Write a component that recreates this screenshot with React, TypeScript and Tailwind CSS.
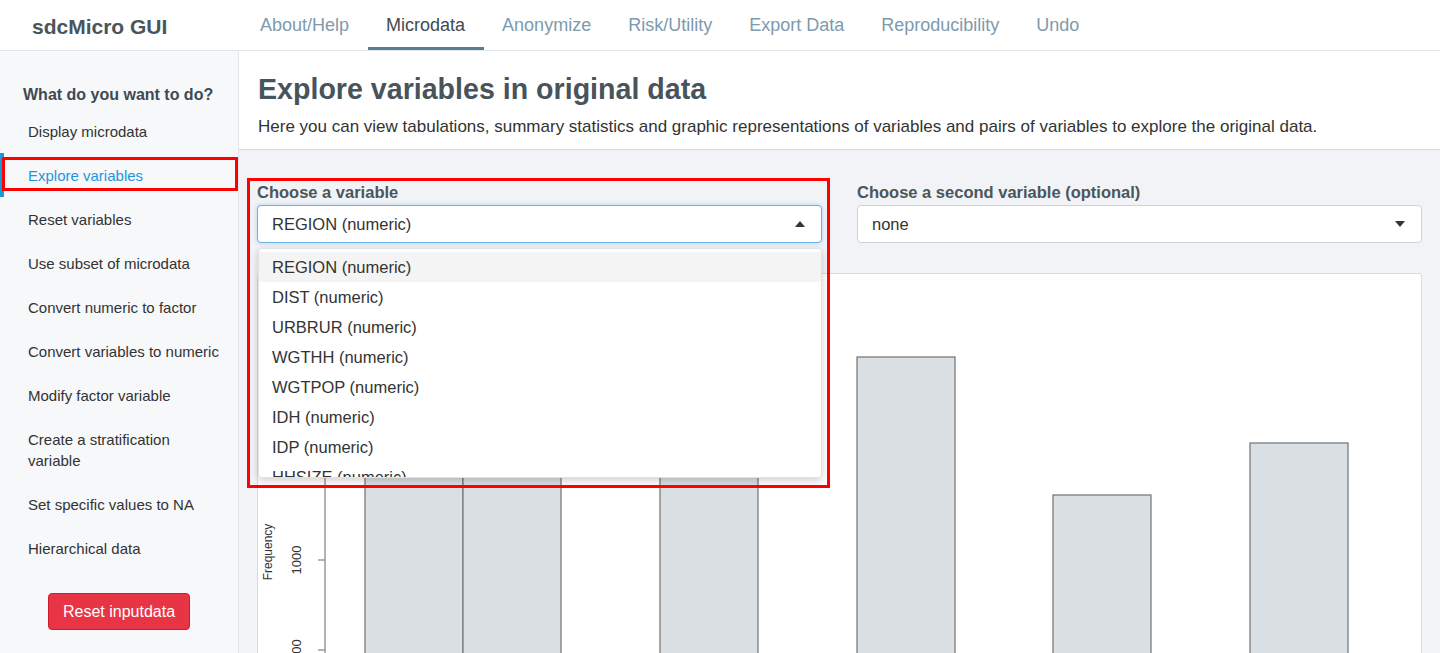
import { useState } from "react";

const navItems = ["About/Help", "Microdata", "Anonymize", "Risk/Utility", "Export Data", "Reproducibility", "Undo"];

const sideItems = [
  "Display microdata",
  "Explore variables",
  "Reset variables",
  "Use subset of microdata",
  "Convert numeric to factor",
  "Convert variables to numeric",
  "Modify factor variable",
  "Create a stratification variable",
  "Set specific values to NA",
  "Hierarchical data",
];

const variables = [
  "REGION (numeric)",
  "DIST (numeric)",
  "URBRUR (numeric)",
  "WGTHH (numeric)",
  "WGTPOP (numeric)",
  "IDH (numeric)",
  "IDP (numeric)",
  "HHSIZE (numeric)",
  "AGEYRS (numeric)",
];

// histogram bars, coordinates inside the plot card
const bars = [
  { x: 107, top: 130 },
  { x: 205, top: 150 },
  { x: 402, top: 60 },
  { x: 599, top: 83 },
  { x: 795, top: 221 },
  { x: 992, top: 169 },
];

function Caret({ up }: { up?: boolean }) {
  return (
    <svg width="10" height="6" viewBox="0 0 10 6" className="shrink-0">
      {up ? <path d="M0 6 L5 0 L10 6 Z" fill="#333" /> : <path d="M0 0 L5 6 L10 0 Z" fill="#333" />}
    </svg>
  );
}

function Histogram() {
  return (
    <svg width="1163" height="420" className="block">
      {bars.map((b, i) => (
        <rect key={i} x={b.x} y={b.top} width={98} height={420 - b.top} fill="#dadfe3" stroke="#7b7b7b" strokeWidth="1.3" />
      ))}
      <line x1="67" y1="100" x2="67" y2="420" stroke="#8a8a8a" strokeWidth="1.3" />
      <line x1="60" y1="286" x2="67" y2="286" stroke="#8a8a8a" strokeWidth="1.3" />
      <line x1="60" y1="376" x2="67" y2="376" stroke="#8a8a8a" strokeWidth="1.3" />
      <text x="40" y="286" transform="rotate(-90 40 286)" textAnchor="middle" dominantBaseline="middle" fontSize="13" fill="#333" fontFamily="Liberation Sans, Arial, sans-serif">1000</text>
      <text x="40" y="376" transform="rotate(-90 40 376)" textAnchor="middle" dominantBaseline="middle" fontSize="13" fill="#333" fontFamily="Liberation Sans, Arial, sans-serif">500</text>
      <text x="11" y="278" transform="rotate(-90 11 278)" textAnchor="middle" dominantBaseline="middle" fontSize="12" fill="#333" fontFamily="Liberation Sans, Arial, sans-serif">Frequency</text>
    </svg>
  );
}

export default function App() {
  const [active] = useState("Explore variables");

  return (
    <div className="w-[1440px] h-[653px] overflow-hidden bg-white font-['Liberation_Sans',Arial,sans-serif] flex flex-col">
      {/* Top navigation */}
      <header className="h-[51px] shrink-0 flex border-b border-[#dfe5ea] bg-white">
        <div className="w-[242px] flex items-center pl-[32px] pt-[4px]">
          <span className="text-[21px] font-bold text-[#48555d]">sdcMicro GUI</span>
        </div>
        <nav className="flex">
          {navItems.map((item) => (
            <div
              key={item}
              className={
                item === "Microdata"
                  ? "pl-[18px] pr-[19px] pt-[3px] flex items-center border-b-[3px] border-[#5b7b8f] text-[18px] text-[#3f4b52]"
                  : "pl-[18px] pr-[19px] pt-[3px] flex items-center border-b-[3px] border-transparent text-[18px] text-[#7e9aac]"
              }
            >
              {item}
            </div>
          ))}
        </nav>
      </header>

      <div className="flex flex-1 min-h-0">
        {/* Sidebar */}
        <aside className="w-[239px] shrink-0 bg-[#f7f8fa] border-r border-[#e3e6ea] pt-[34px]">
          <h3 className="pl-[23px] text-[16px] leading-[20px] font-bold text-[#3e4a52] mb-[4px]">What do you want to do?</h3>
          {sideItems.map((item) => (
            <div
              key={item}
              className={
                item === active
                  ? "relative pl-[28px] pr-[16px] py-[11.5px] text-[15px] leading-[21px] text-[#1b97de] border-l-[4px] border-[#1b97de]"
                  : "relative pl-[28px] pr-[16px] py-[11.5px] text-[15px] leading-[21px] text-[#333]"
              }
            >
              <span className={item === active ? "-ml-[4px]" : ""}>{item}</span>
              {item === active && (
                <div className="absolute -left-[2px] right-[0px] top-[4px] bottom-[6px] border-[3px] border-[#ff0000]" />
              )}
            </div>
          ))}
          <div className="pl-[48px] mt-[23px]">
            <button className="h-[37px] w-[142px] rounded-[4px] bg-[#e83546] border border-[#d11a2e] text-white text-[16px]">
              Reset inputdata
            </button>
          </div>
        </aside>

        {/* Main content */}
        <main className="flex-1 bg-[#f1f3f6] flex flex-col min-w-0">
          <section className="bg-white border-b border-[#d4d7db] px-[19px] pt-[21px] pb-[11px]">
            <h1 className="text-[28.6px] leading-[34px] font-bold text-[#48545b]">Explore variables in original data</h1>
            <p className="mt-[10px] text-[17px] leading-[22px] text-[#333]">
              Here you can view tabulations, summary statistics and graphic representations of variables and pairs of variables to explore the original data.
            </p>
          </section>

          <div className="px-[18px] pt-[32px]">
            <div className="grid grid-cols-2 gap-[35px]">
              <div className="relative z-10">
                <label className="block text-[16.5px] leading-[20px] font-bold text-[#4a565d] mb-[3px]">Choose a variable</label>
                <div className="h-[38px] bg-white border border-[#6fb2e6] rounded-[4px] shadow-[0_0_4px_rgba(102,175,233,0.5)] flex items-center justify-between pl-[14px] pr-[16px] text-[16.5px] text-[#333]">
                  <span>REGION (numeric)</span>
                  <Caret up />
                </div>
                <div className="absolute left-[1px] top-[66px] w-[564px] h-[230px] bg-white rounded-[4px] border border-[#e2e2e2] shadow-[0_3px_8px_rgba(0,0,0,0.18)] overflow-hidden pt-[3px]">
                  {variables.map((v, i) => (
                    <div
                      key={v}
                      className={
                        i === 0
                          ? "h-[30px] flex items-center px-[13px] text-[16.5px] text-[#333] bg-[#f4f4f4]"
                          : "h-[30px] flex items-center px-[13px] text-[16.5px] text-[#333]"
                      }
                    >
                      {v}
                    </div>
                  ))}
                </div>
                <div className="absolute -left-[10px] -right-[8px] -top-[4px] h-[310px] border-[3px] border-[#ff0000] pointer-events-none" />
              </div>

              <div>
                <label className="block text-[16.5px] leading-[20px] font-bold text-[#4a565d] mb-[3px]">Choose a second variable (optional)</label>
                <div className="h-[38px] bg-white border border-[#cfd2d6] rounded-[4px] flex items-center justify-between pl-[14px] pr-[16px] text-[16.5px] text-[#333]">
                  <span>none</span>
                  <Caret />
                </div>
              </div>
            </div>

            <div className="mt-[30px] bg-white border border-[#d9dcdf] rounded-[3px] overflow-hidden">
              <Histogram />
            </div>
          </div>
        </main>
      </div>
    </div>
  );
}
